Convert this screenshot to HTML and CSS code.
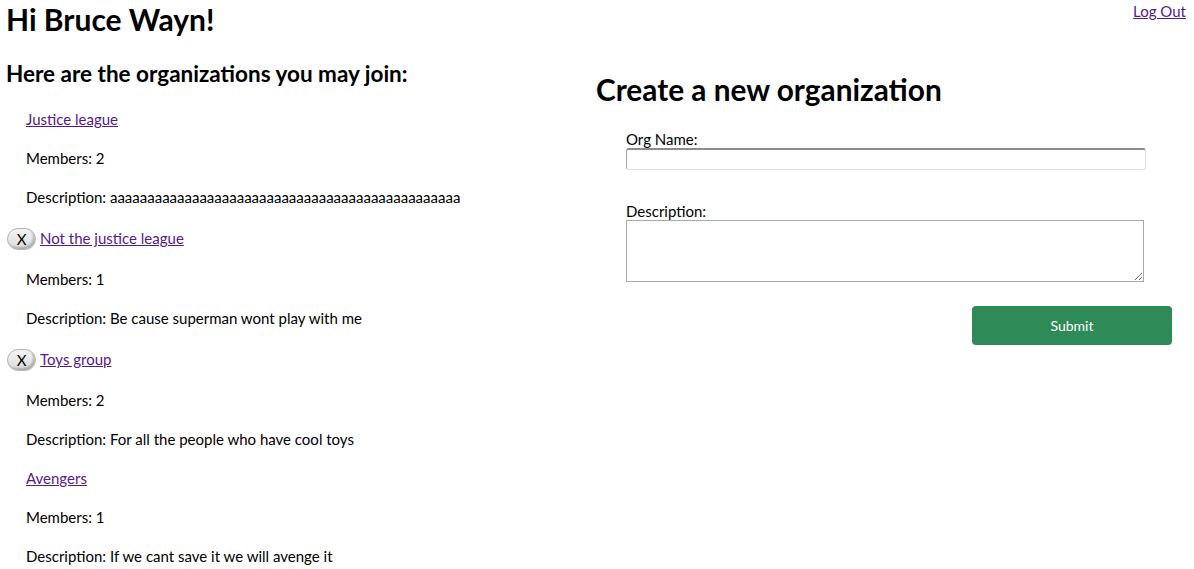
FILE: index.html
```html
<!DOCTYPE html>
<html lang="en">
<head>
<meta charset="utf-8">
<title>Organizations</title>
<link rel="stylesheet" href="styles.css">
</head>
<body>
<header class="top">
  <h1 class="greeting">Hi Bruce Wayn!</h1>
  <a class="logout" href="#">Log Out</a>
</header>
<main class="cols">
  <section class="orgs">
    <h2 class="orgs-title">Here are the organizations you may join:</h2>
    <div class="org-list">
      <p class="row"><a href="#">Justice league</a></p>
      <p class="row">Members: 2</p>
      <p class="row">Description: aaaaaaaaaaaaaaaaaaaaaaaaaaaaaaaaaaaaaaaaaaaaaaa</p>
      <p class="row row-btn"><button class="del">X</button><a href="#">Not the justice league</a></p>
      <p class="row">Members: 1</p>
      <p class="row">Description: Be cause superman wont play with me</p>
      <p class="row row-btn"><button class="del">X</button><a href="#">Toys group</a></p>
      <p class="row">Members: 2</p>
      <p class="row">Description: For all the people who have cool toys</p>
      <p class="row"><a href="#">Avengers</a></p>
      <p class="row">Members: 1</p>
      <p class="row">Description: If we cant save it we will avenge it</p>
    </div>
  </section>
  <section class="create">
    <h1 class="create-title">Create a new organization</h1>
    <form class="form">
      <label class="lbl" for="name">Org Name:</label>
      <input class="inp" id="name" type="text">
      <label class="lbl lbl-desc" for="desc">Description:</label>
      <textarea class="ta" id="desc"></textarea>
      <button class="submit" type="button">Submit</button>
    </form>
  </section>
</main>
</body>
</html>
```
FILE: styles.css
```css
html, body {
  margin: 0;
  background: #fff;
}
body {
  padding: 0 8px 0 6px;
  font-family: Lato, "Open Sans", sans-serif;
  font-size: 15px;
  color: #000;
  overflow: hidden;
}
a {
  color: #551a8b;
  text-decoration: underline;
}
.top {
  display: flex;
  justify-content: space-between;
  align-items: flex-start;
  height: 38px;
}
.greeting {
  margin: 0;
  padding-top: 1px;
  font-size: 30px;
  line-height: 36px;
  font-weight: 700;
}
.logout {
  margin-top: 2px;
  line-height: 19px;
}
.cols {
  display: flex;
}
.orgs {
  width: 590px;
  flex: none;
}
.orgs-title {
  margin: 22px 0 0;
  font-size: 22.5px;
  line-height: 28px;
  font-weight: 700;
}
.org-list {
  display: flex;
  flex-direction: column;
  gap: 20px;
  padding: 22px 0 0 20px;
}
.row {
  margin: 0;
  line-height: 19px;
  display: flex;
  align-items: center;
}
.row-btn {
  height: 23px;
}
.del {
  margin: 0 4px 0 -19px;
  width: 29px;
  height: 22px;
  padding: 0;
  font-family: Lato, sans-serif;
  font-size: 15px;
  color: #000;
  border: 1px solid #b4b4b4;
  border-radius: 11px;
  background: linear-gradient(#f4f4f4, #dcdcdc);
  box-shadow: inset -2px -2px 2px rgba(0, 0, 0, 0.22);
}
.create {
  flex: 1;
}
.create-title {
  margin: 34px 0 0;
  font-size: 29.8px;
  line-height: 36px;
  font-weight: 700;
}
.form {
  display: flex;
  flex-direction: column;
  align-items: flex-start;
  width: 546px;
  margin: 22px 0 0 30px;
}
.lbl {
  line-height: 19px;
}
.lbl-desc {
  margin-top: 32px;
}
.inp {
  margin: -1px 0 0;
  box-sizing: border-box;
  width: 520px;
  height: 22px;
  border: 1px solid #e3e3e3;
  border-top: 2px solid #8c8c8c;
  border-left-color: #a6a6a6;
  border-radius: 3px;
  padding: 0 3px;
  font-family: Lato, sans-serif;
}
.ta {
  margin: -1px 0 0;
  box-sizing: border-box;
  width: 518px;
  height: 62px;
  border: 1px solid #a9a9a9;
  border-radius: 0;
  padding: 2px;
  font-family: Lato, sans-serif;
}
.submit {
  align-self: flex-end;
  margin-top: 24px;
  width: 200px;
  height: 39px;
  border: none;
  border-radius: 4px;
  background: #2e8b57;
  color: #fff;
  font-family: Lato, sans-serif;
  font-size: 14px;
}
```
